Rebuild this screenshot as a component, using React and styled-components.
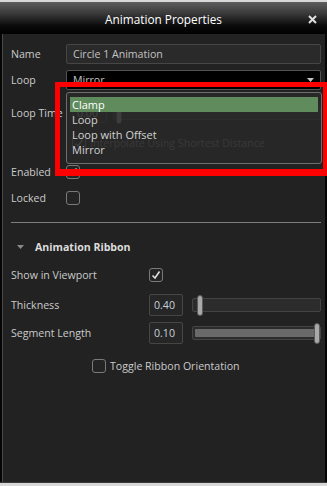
import React from "react";
import styled, { createGlobalStyle } from "styled-components";

const Global = createGlobalStyle`
  html, body { margin: 0; padding: 0; background: #d8d8d8; }
  body { font-family: "Open Sans", "Noto Sans", sans-serif; }
  #root { width: 327px; height: 486px; overflow: hidden; }
`;

const FS = "10.6px";

const Page = styled.div`
  position: relative;
  width: 327px;
  height: 486px;
  padding-top: 2px;
  box-sizing: border-box;
`;

const Window = styled.div`
  display: flex;
  flex-direction: column;
  height: 481px;
  background: #050505;
  border-bottom: 1px solid #3a3a3a;
  box-sizing: border-box;
`;

const TitleBar = styled.div`
  display: grid;
  grid-template-columns: 1fr auto 1fr;
  align-items: center;
  height: 32px;
  padding-top: 2px;
  box-sizing: border-box;
  background: linear-gradient(#5e5e5e 0%, #3a3a3a 35%, #0a0a0a 75%, #000 100%);
`;

const Title = styled.div`
  grid-column: 2;
  color: #fff;
  font-size: 11.8px;
`;

const Close = styled.div`
  grid-column: 3;
  justify-self: end;
  margin-right: 10px;
  display: flex;
`;

const Body = styled.div`
  position: relative;
  flex: 1;
  margin: 0 2px 0 2px;
  border-left: 1px solid #4a4a4a;
  background: #222222;
  padding: 10px 4px 0 8px;
  display: flex;
  flex-direction: column;
`;

const Row = styled.div`
  display: flex;
  align-items: center;
  height: ${(p) => p.$h}px;
  margin-top: ${(p) => p.$mt || 0}px;
  padding-left: ${(p) => p.$indent || 0}px;
`;

const Label = styled.div`
  width: ${(p) => p.$w}px;
  flex-shrink: 0;
  color: #cbcbcb;
  font-size: ${FS};
  white-space: nowrap;
`;

const Field = styled.div`
  flex: 1;
  height: 20px;
  box-sizing: border-box;
  display: flex;
  align-items: center;
  padding: 0 6px;
  border-radius: 2px;
  font-size: ${FS};
  color: #c2c2c2;
  background: ${(p) => (p.$dark ? "#000" : "#2a2a2a")};
  border: 1px solid ${(p) => (p.$dark ? "#525252" : "#464646")};
  justify-content: space-between;
`;

const NumberBox = styled.div`
  width: ${(p) => p.$w || 34}px;
  height: ${(p) => p.$h || 22}px;
  box-sizing: border-box;
  flex-shrink: 0;
  display: flex;
  align-items: center;
  padding-left: 4px;
  border: 1px solid #464646;
  border-radius: 2px;
  background: #262626;
  color: #c9d2dc;
  font-size: ${FS};
`;

const Slider = styled.div`
  position: relative;
  flex: 1;
  height: 14px;
  margin-left: ${(p) => p.$ml}px;
  box-sizing: border-box;
  border: 1px solid #444;
  border-radius: 2px;
  background: #2c2c2c;
`;

const Fill = styled.div`
  position: absolute;
  left: 2px;
  top: 2px;
  bottom: 2px;
  background: #6a6a6a;
  border-radius: 1px;
`;

const Thumb = styled.div`
  position: absolute;
  top: -4px;
  width: 6px;
  height: 21px;
  box-sizing: border-box;
  background: #a9a9a9;
  border: 1px solid #5a5a5a;
  border-radius: 3px;
`;

const Box = styled.div`
  width: 14px;
  height: 14px;
  box-sizing: border-box;
  flex-shrink: 0;
  border: 1px solid #7a7a7a;
  border-radius: 3px;
  background: #242424;
  display: flex;
  align-items: center;
  justify-content: center;
`;

const CheckText = styled.div`
  margin-left: 4px;
  color: ${(p) => p.$color || "#cbcbcb"};
  font-size: ${FS};
  white-space: nowrap;
`;

const Separator = styled.div`
  height: 1px;
  background: #7e7e7e;
  margin-top: ${(p) => p.$mt}px;
`;

const Header = styled.div`
  display: flex;
  align-items: center;
  height: 14px;
  margin-top: ${(p) => p.$mt}px;
  padding-left: 6px;
  gap: 11px;
  color: #dcdcdc;
  font-size: ${FS};
  font-weight: 700;
`;

const Dropdown = styled.div`
  position: absolute;
  left: 63px;
  top: 58px;
  width: 256px;
  height: 72px;
  box-sizing: border-box;
  padding: 4px 3px;
  border: 1px solid #6e6e6e;
  border-radius: 3px;
  background: rgba(40, 40, 40, 0.84);
`;

const Item = styled.div`
  height: 15px;
  display: flex;
  align-items: center;
  padding-left: 2px;
  font-size: 11px;
  color: ${(p) => (p.$active ? "#ffffff" : "#d2d2d2")};
  background: ${(p) => (p.$active ? "#5f8b5d" : "transparent")};
`;

const Annotation = styled.div`
  position: absolute;
  left: 55px;
  top: 82px;
  width: 272px;
  height: 94px;
  box-sizing: border-box;
  border-style: solid;
  border-color: #ff0000;
  border-width: 5px 4px 7px 5px;
  pointer-events: none;
`;

const Check = ({ color = "#dedede" }) => (
  <svg width="10" height="10" viewBox="0 0 10 10">
    <polyline points="1.5,5.5 4,8 8.5,1.5" fill="none" stroke={color} strokeWidth="1.6" />
  </svg>
);

const Checkbox = ({ checked, color }) => <Box>{checked && <Check color={color} />}</Box>;

const SliderControl = ({ value, ml }) => (
  <Slider $ml={ml}>
    <Fill style={{ width: `calc(${value}% - 4px)` }} />
    <Thumb style={{ left: `calc(${value}% - ${(value / 100) * 6}px)` }} />
  </Slider>
);

export default function App() {
  return (
    <>
      <Global />
      <Page>
        <Window>
          <TitleBar>
            <Title>Animation Properties</Title>
            <Close>
              <svg width="9" height="9" viewBox="0 0 9 9">
                <path d="M1 1 L8 8 M8 1 L1 8" stroke="#e0e0e0" strokeWidth="2" />
              </svg>
            </Close>
          </TitleBar>
          <Body>
            <Row $h={20}>
              <Label $w={55}>Name</Label>
              <Field>Circle 1 Animation</Field>
            </Row>
            <Row $h={20} $mt={6}>
              <Label $w={55}>Loop</Label>
              <Field $dark>
                <span>Mirror</span>
                <svg width="7" height="4" viewBox="0 0 7 4">
                  <path d="M0 0 L7 0 L3.5 4 Z" fill="#c4c4c4" />
                </svg>
              </Field>
            </Row>
            <Row $h={20} $mt={13}>
              <Label $w={61}>Loop Time</Label>
              <NumberBox $w={35} $h={20}>0.00</NumberBox>
              <SliderControl value={1} ml={6} />
            </Row>
            <Row $h={14} $mt={13} $indent={61}>
              <Checkbox checked color="#9a9a9a" />
              <CheckText $color="#8a8a8a">Interpolate Using Shortest Distance</CheckText>
            </Row>
            <Row $h={14} $mt={15}>
              <Label $w={55}>Enabled</Label>
              <Checkbox checked />
            </Row>
            <Row $h={14} $mt={12}>
              <Label $w={55}>Locked</Label>
              <Checkbox />
            </Row>
            <Separator $mt={17} />
            <Header $mt={17}>
              <svg width="7" height="4" viewBox="0 0 7 4">
                <path d="M0 0 L7 0 L3.5 4 Z" fill="#8a8a8a" />
              </svg>
              Animation Ribbon
            </Header>
            <Row $h={14} $mt={14}>
              <Label $w={138}>Show in Viewport</Label>
              <Checkbox checked />
            </Row>
            <Row $h={22} $mt={12}>
              <Label $w={138}>Thickness</Label>
              <NumberBox>0.40</NumberBox>
              <SliderControl value={3} ml={9} />
            </Row>
            <Row $h={22} $mt={6}>
              <Label $w={138}>Segment Length</Label>
              <NumberBox>0.10</NumberBox>
              <SliderControl value={100} ml={9} />
            </Row>
            <Row $h={14} $mt={15} $indent={81}>
              <Checkbox />
              <CheckText>Toggle Ribbon Orientation</CheckText>
            </Row>
            <Dropdown>
              <Item $active>Clamp</Item>
              <Item>Loop</Item>
              <Item>Loop with Offset</Item>
              <Item>Mirror</Item>
            </Dropdown>
          </Body>
        </Window>
        <Annotation />
      </Page>
    </>
  );
}
